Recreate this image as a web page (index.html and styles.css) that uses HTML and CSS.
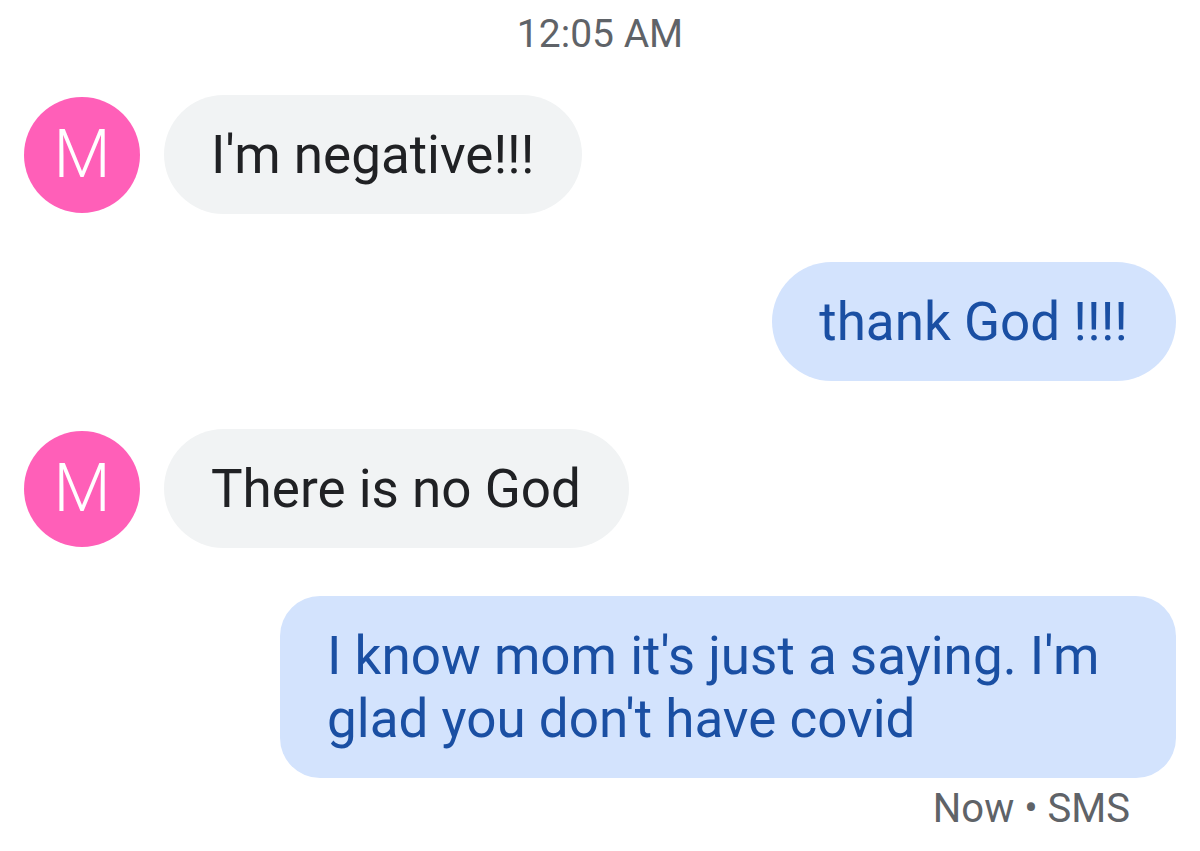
FILE: index.html
```html
<!DOCTYPE html>
<html lang="en">
<head>
    <meta charset="UTF-8">
    <meta name="viewport" content="width=device-width, initial-scale=1.0">
    <title>Messages</title>
    <link rel="stylesheet" href="styles.css">
</head>
<body>
    <div class="thread">
        <div class="timestamp">12:05 AM</div>

        <div class="row received">
            <div class="avatar">M</div>
            <div class="bubble">I'm negative!!!</div>
        </div>

        <div class="row sent">
            <div class="bubble">thank God !!!!</div>
        </div>

        <div class="row received">
            <div class="avatar">M</div>
            <div class="bubble">There is no God</div>
        </div>

        <div class="row sent last">
            <div class="bubble">I know mom it's just a saying. I'm glad you don't have covid</div>
        </div>

        <div class="status">Now • SMS</div>
    </div>
</body>
</html>
```

FILE: styles.css
```css
body {
    margin: 0;
    background: #fff;
    font-family: Roboto, "Noto Sans", Arial, sans-serif;
}
.thread {
    display: flex;
    flex-direction: column;
    gap: 48px;
    padding: 9px 24px 0 24px;
}
.timestamp {
    text-align: center;
    font-size: 39px;
    line-height: 50px;
    color: #5f6368;
    margin-bottom: -12px;
}
.row {
    display: flex;
    align-items: center;
    gap: 24px;
}
.row.sent {
    justify-content: flex-end;
}
.avatar {
    flex: none;
    width: 116px;
    height: 116px;
    border-radius: 50%;
    background: #ff5fb8;
    color: #fff;
    font-size: 66px;
    font-weight: 300;
    display: flex;
    align-items: center;
    justify-content: center;
}
.bubble {
    box-sizing: border-box;
    font-size: 53px;
    line-height: 63px;
    padding: 29px 48px 27px 47px;
    border-radius: 60px;
    background: #f1f3f4;
    color: #202124;
}
.sent .bubble {
    background: #d3e3fd;
    color: #1a4fa3;
    max-width: 896px;
}
.last .bubble {
    border-radius: 40px;
}
.status {
    margin-top: -41px;
    padding-right: 46px;
    text-align: right;
    font-size: 40px;
    line-height: 48px;
    color: #5f6368;
}
```
